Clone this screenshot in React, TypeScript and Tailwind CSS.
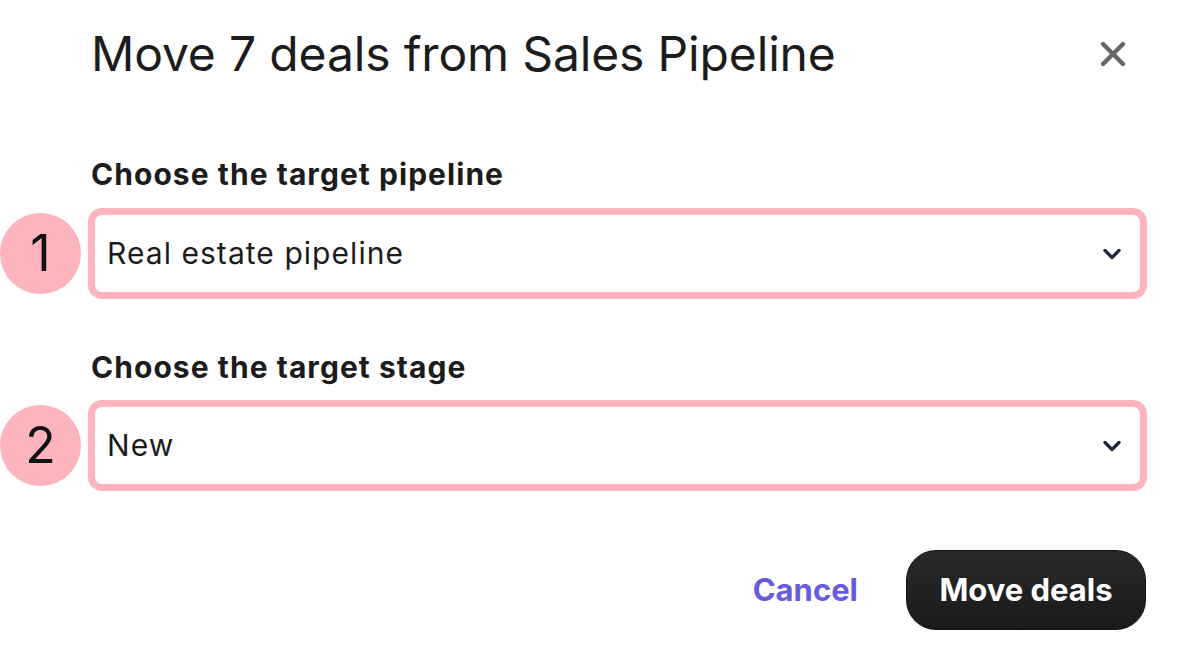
import { X } from "lucide-react";

const NumberBadge = ({ n }: { n: number }) => (
  <div className="flex h-[81px] w-[81px] shrink-0 items-center justify-center rounded-full bg-[#fdb4bd] text-[50px] font-normal text-[#111]">
    {n}
  </div>
);

const SelectBox = ({ value }: { value: string }) => (
  <div className="flex h-[91px] flex-1 items-center justify-between rounded-[14px] border-[7px] border-[#fdb4bd] bg-white pl-[12px] pr-[18px]">
    <span className="text-[30px] tracking-[1.05px] text-[#1c1c1c]">{value}</span>
    <svg width="20" height="12" viewBox="0 0 20 12" fill="none">
      <path
        d="M3 2.5 L10 9.5 L17 2.5"
        stroke="#1f2a3c"
        strokeWidth="3.4"
        strokeLinecap="round"
        strokeLinejoin="round"
      />
    </svg>
  </div>
);

export default function App() {
  return (
    <div
      className="flex h-[652px] w-[1186px] flex-col bg-white text-[#1c1c1c]"
      style={{ fontFamily: "Inter, 'Noto Sans', sans-serif" }}
    >
      {/* Header */}
      <div className="flex h-[60px] items-center justify-between pl-[91px] pr-[53px] mt-[24px]">
        <h1 className="text-[48px] font-normal leading-[60px] tracking-[-0.15px]">
          Move 7 deals from Sales Pipeline
        </h1>
        <X className="h-[40px] w-[40px] text-[#666]" strokeWidth={2.6} />
      </div>

      {/* Pipeline */}
      <div className="mt-[72px] pl-[91px] text-[30px] font-bold leading-[36px] tracking-[1.05px]">
        Choose the target pipeline
      </div>
      <div className="mt-[16px] flex items-center gap-[7px] pr-[39px]">
        <NumberBadge n={1} />
        <SelectBox value="Real estate pipeline" />
      </div>

      {/* Stage */}
      <div className="mt-[50px] pl-[91px] text-[30px] font-bold leading-[36px] tracking-[1.05px]">
        Choose the target stage
      </div>
      <div className="mt-[15px] flex items-center gap-[7px] pr-[39px]">
        <NumberBadge n={2} />
        <SelectBox value="New" />
      </div>

      {/* Footer */}
      <div className="mt-[59px] flex items-center justify-end gap-[48px] pr-[40px]">
        <button className="text-[31px] font-bold text-[#6a5ae0]">Cancel</button>
        <button className="h-[80px] w-[240px] rounded-[30px] border border-[#111] bg-gradient-to-b from-[#2a2a2a] to-[#1a1a1a] text-[31px] font-bold text-white">
          Move deals
        </button>
      </div>
    </div>
  );
}
